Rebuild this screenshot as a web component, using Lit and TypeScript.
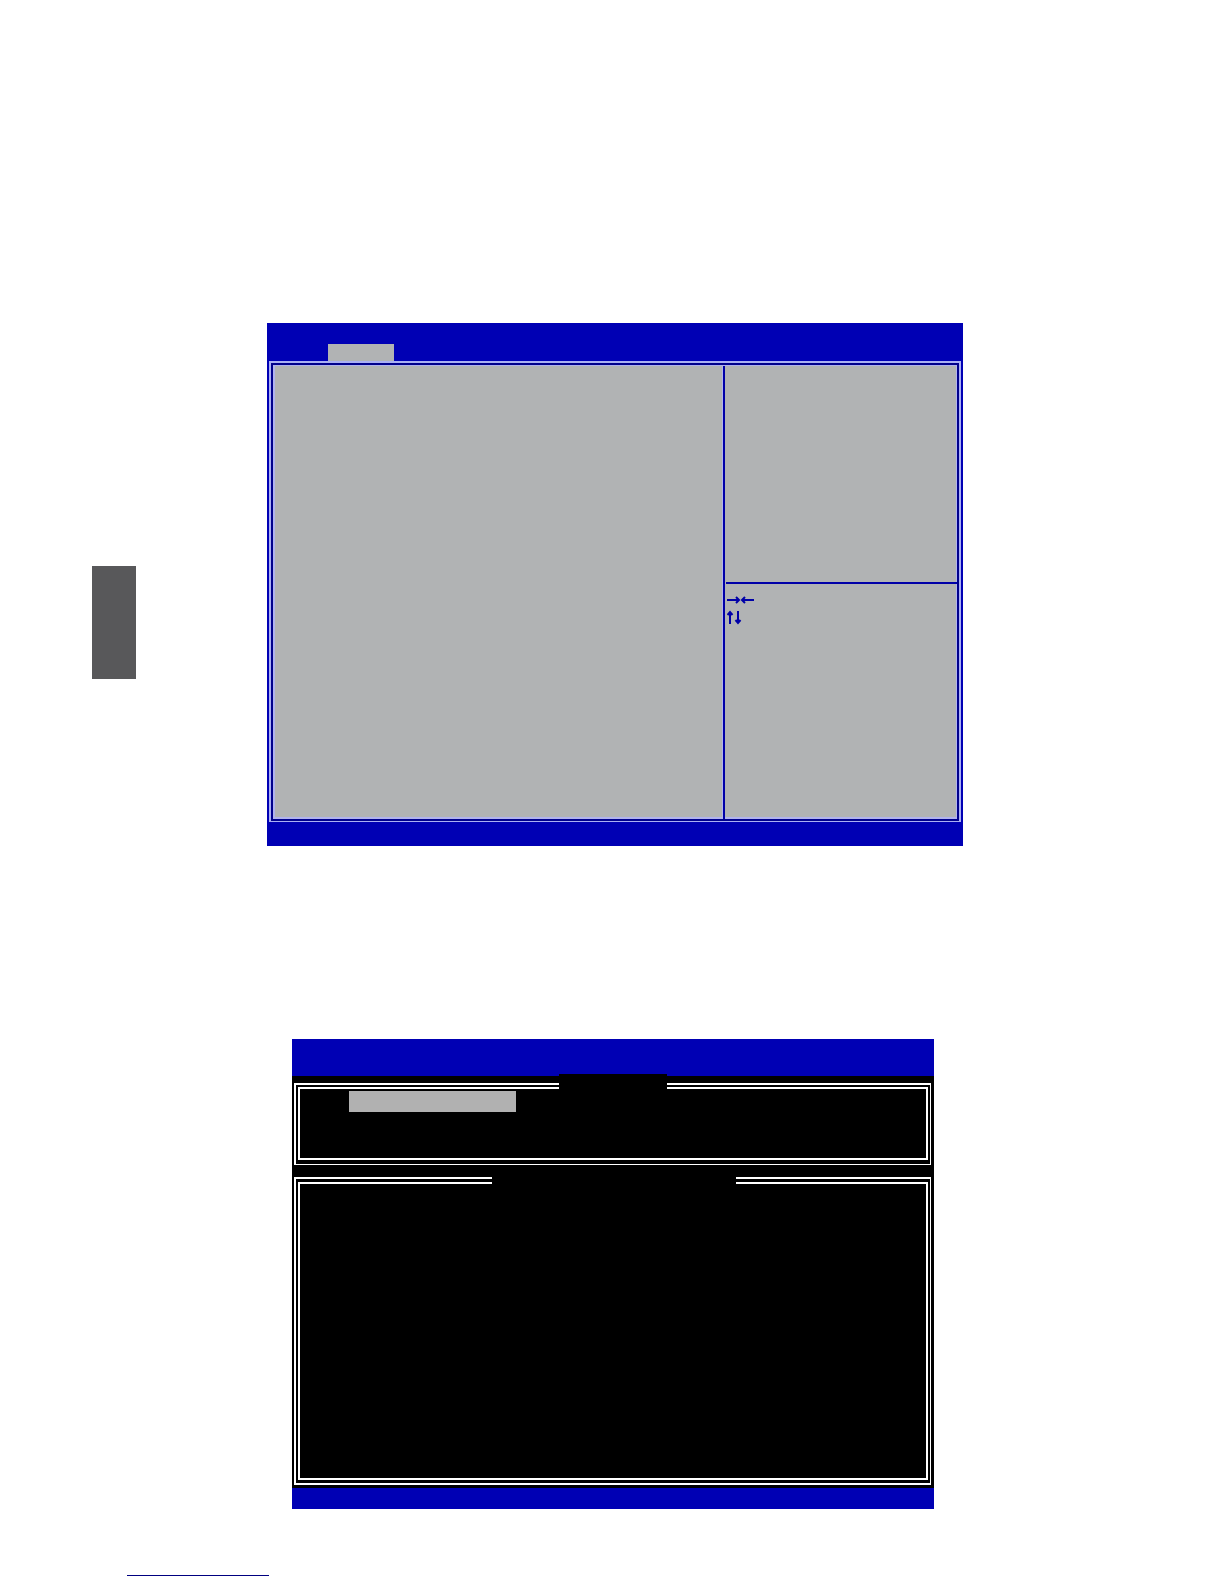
import { LitElement, html, css } from "lit";
import { customElement } from "lit/decorators.js";

@customElement("setup-screen")
class SetupScreen extends LitElement {
  static styles = css`
    :host { display: block; background: #0000b4; padding: 21px 2px 24px; }
    .tabs { display: flex; padding-left: 59px; }
    .tab { width: 66px; height: 17px; background: #b1b3b4; }
    .frame { border: 2px solid #aab0f4; border-bottom-width: 1px; padding: 2px; background: #00008c; }
    .body {
      display: grid;
      grid-template-columns: 1fr 233px;
      min-height: 451px;
      border: 2px solid #b1b3ee;
      border-width: 1px 1px 2px 2px;
      background: #b1b3b4;
    }
    .side {
      display: grid;
      grid-template-rows: 216px 1fr;
      margin: 0 -1px -2px 0;
      border-left: 2px solid #0000a8;
      box-shadow: -1px 0 #b1b3ee;
    }
    .keys { border-top: 2px solid #0000a8; margin-left: 1px; padding: 8px 0 0 1px; }
    .key { display: block; width: 28px; height: 17px; }
    .key path { fill: none; stroke: #0000a8; stroke-width: 2; }
  `;
  render() {
    return html`
      <div class="tabs"><div class="tab"></div></div>
      <div class="frame">
        <div class="body">
          <div></div>
          <div class="side">
            <div></div>
            <div class="keys">
              <svg class="key" viewBox="0 0 28 17" role="img" aria-label="→←">
                <path d="M0 8H12M9 5L12 8L9 11M27 8H15M18 5L15 8L18 11" />
              </svg>
              <svg class="key" viewBox="0 0 28 17" role="img" aria-label="↑↓">
                <path d="M3 15V3M0.5 6L3 3L5.5 6M11 2V14M8.5 11L11 14L13.5 11" />
              </svg>
            </div>
          </div>
        </div>
      </div>
    `;
  }
}

@customElement("boot-screen")
class BootScreen extends LitElement {
  static styles = css`
    :host { display: block; background: #000; }
    .bar { background: #0000b4; height: 37px; }
    .foot { background: #0000b4; height: 21px; }
    .content { display: grid; gap: 12px; padding: 7px 3px 3px 2px; }
    .frame { position: relative; border: 2px solid #fff; border-right-width: 1px; }
    .short { border-bottom-width: 1px; padding: 2px 2px 4px; }
    .tall { padding: 3px 2px; }
    .inner { border: 2px solid #fff; }
    .short .inner { min-height: 69px; }
    .tall .inner { min-height: 294px; }
    .title { position: absolute; left: 0; right: 0; margin: 0 auto; background: #000; }
    .short .title { top: -11px; width: 108px; height: 16px; }
    .tall .title { top: -2px; left: 2px; width: 244px; height: 8px; }
    .selected { width: 167px; height: 21px; margin: 2px 0 0 49px; background: #b1b1b1; }
  `;
  render() {
    return html`
      <div class="bar"></div>
      <div class="content">
        <div class="frame short">
          <div class="title"></div>
          <div class="inner"><div class="selected"></div></div>
        </div>
        <div class="frame tall">
          <div class="title"></div>
          <div class="inner"></div>
        </div>
      </div>
      <div class="foot"></div>
    `;
  }
}

@customElement("app-root")
class AppRoot extends LitElement {
  static styles = css`
    :host { display: block; background: #fff; }
    .page { display: grid; grid-template-columns: 44px 1fr; padding: 0 261px 0 92px; }
    .marker { height: 113px; margin-top: 566px; background: #58585a; }
    .main { padding: 323px 0 66px 131px; }
    boot-screen { margin: 193px 29px 0 25px; }
    .rule { width: 142px; height: 1px; margin: 0 0 8px 127px; background: #000080; }
  `;
  render() {
    return html`
      <div class="page">
        <div class="marker"></div>
        <main class="main">
          <setup-screen></setup-screen>
          <boot-screen></boot-screen>
        </main>
      </div>
      <div class="rule"></div>
    `;
  }
}
